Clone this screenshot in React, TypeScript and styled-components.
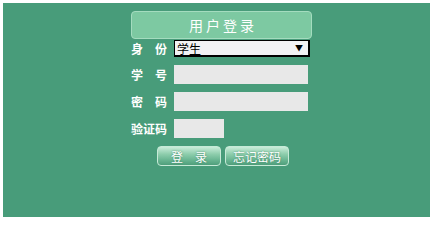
import React from 'react'
import styled, { createGlobalStyle } from 'styled-components'

const GlobalStyle = createGlobalStyle`
  html, body {
    margin: 0;
    padding: 0;
    background: #ffffff;
  }
  body {
    font-family: "Noto Sans CJK SC", "Liberation Sans", sans-serif;
  }
`

const Panel = styled.div`
  margin: 3px;
  width: 427px;
  height: 214px;
  box-sizing: border-box;
  padding: 8px 0 0 128px;
  background: #489c7a;
`

const Form = styled.div`
  width: 181px;
  display: flex;
  flex-direction: column;
`

const Title = styled.div`
  height: 28px;
  box-sizing: border-box;
  border: 1px solid #a4dcbf;
  border-radius: 4px;
  background: #7dc9a2;
  color: #ffffff;
  font-size: 14px;
  letter-spacing: 3px;
  text-indent: 3px;
  display: flex;
  align-items: center;
  justify-content: center;
`

const Rows = styled.div`
  margin-top: 1px;
  display: flex;
  flex-direction: column;
  gap: 8px;
`

const Row = styled.div`
  display: flex;
  align-items: center;
  gap: 7px;
`

const Label = styled.span`
  width: 36px;
  font-size: 12px;
  line-height: 17px;
  font-weight: bold;
  color: #ffffff;
  white-space: nowrap;
`

const SelectBox = styled.div`
  width: 136px;
  height: 17px;
  box-sizing: border-box;
  border: 1px solid #000000;
  border-right-width: 2px;
  border-bottom-width: 2px;
  background: #f2f2f4;
  display: flex;
  align-items: center;
  justify-content: space-between;
  padding: 0 5px 0 2px;
  font-size: 12px;
  color: #000000;
`

const Arrow = styled.span`
  font-size: 8px;
  line-height: 1;
`

const Field = styled.div<{ $w: number }>`
  width: ${(p) => p.$w}px;
  height: 19px;
  background: #e8e8e8;
`

const Buttons = styled.div`
  margin-top: 8px;
  margin-left: 26px;
  display: flex;
  gap: 4px;
`

const Button = styled.div`
  width: 64px;
  height: 20px;
  box-sizing: border-box;
  border: 1px solid #c6ead7;
  border-radius: 4px;
  background: linear-gradient(#c9ecd9 0%, #8dcdac 40%, #66b38f 75%, #4f9e7b 100%);
  color: #ffffff;
  font-size: 12px;
  display: flex;
  align-items: center;
  justify-content: center;
  text-shadow: 0 0 2px #3f8565;
`

export default function App() {
  return (
    <>
      <GlobalStyle />
      <Panel>
        <Form>
          <Title>用户登录</Title>
          <Rows>
            <Row>
              <Label>身　份</Label>
              <SelectBox>
                <span>学生</span>
                <Arrow>▼</Arrow>
              </SelectBox>
            </Row>
            <Row>
              <Label>学　号</Label>
              <Field $w={134} />
            </Row>
            <Row>
              <Label>密　码</Label>
              <Field $w={134} />
            </Row>
            <Row>
              <Label>验证码</Label>
              <Field $w={50} />
            </Row>
          </Rows>
          <Buttons>
            <Button>登　录</Button>
            <Button>忘记密码</Button>
          </Buttons>
        </Form>
      </Panel>
    </>
  )
}
